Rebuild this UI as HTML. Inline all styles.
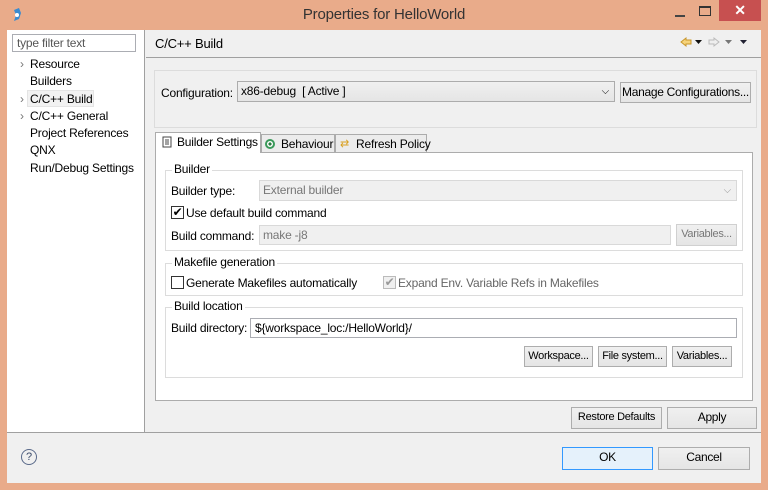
<!DOCTYPE html><html><head><style>
*{box-sizing:border-box;margin:0;padding:0}
body{width:768px;height:490px;background:#e9ab8a;font:12px "Liberation Sans",sans-serif;letter-spacing:-0.2px;color:#000;position:relative;overflow:hidden}
.a{position:absolute;white-space:nowrap}
.btn{position:absolute;white-space:nowrap;overflow:hidden;border:1px solid #adadad;background:linear-gradient(#f0f0f0,#e5e5e5);text-align:center;line-height:19px;font-size:11px;letter-spacing:-0.3px}
.grp{position:absolute;border:1px solid #dcdcdc}
.gl{position:absolute;top:-9px;left:6px;padding:0 2px;background:#fff;white-space:nowrap}
.cb{position:absolute;width:13px;height:13px;border:1px solid #333;background:#fff}
</style></head><body>
<svg class="a" style="left:10px;top:7px" width="14" height="16"><path d="M4 3 L9 1 L11 6 L9 12 L4 14 L6 8Z" fill="#3a8bd0"/><circle cx="7" cy="8" r="2" fill="#fff"/></svg>
<div class="a" style="left:0;width:768px;top:6px;text-align:center;font-size:15px;color:#333">Properties for HelloWorld</div>
<div class="a" style="left:675px;top:15px;width:10px;height:2px;background:#444"></div>
<div class="a" style="left:699px;top:6px;width:12px;height:10px;border:1px solid #333;border-top-width:2px"></div>
<div class="a" style="left:719px;top:0;width:42px;height:21px;background:#c75050;color:#fff;text-align:center;font-size:14px;line-height:20px;font-weight:bold">✕</div>
<div class="a" style="left:7px;top:30px;width:754px;height:453px;background:#f0f0f0"></div>
<div class="a" style="left:7px;top:30px;width:138px;height:402px;background:#fff;border-right:1px solid #a0a0a0"></div>
<div class="a" style="left:12px;top:34px;width:124px;height:18px;border:1px solid #abadb3;background:#fff;color:#555;padding-left:4px;line-height:16px">type filter text</div>
<div class="a" style="left:20px;top:57px;color:#777">›</div>
<div class="a" style="left:30px;top:57px">Resource</div>
<div class="a" style="left:30px;top:74px">Builders</div>
<div class="a" style="left:20px;top:92px;color:#777">›</div>
<div class="a" style="left:27px;top:90px;width:67px;height:17px;background:#f2f2f2;border:1px solid #e4e4e4"></div>
<div class="a" style="left:30px;top:92px">C/C++ Build</div>
<div class="a" style="left:20px;top:109px;color:#777">›</div>
<div class="a" style="left:30px;top:109px">C/C++ General</div>
<div class="a" style="left:30px;top:126px">Project References</div>
<div class="a" style="left:30px;top:143px">QNX</div>
<div class="a" style="left:30px;top:161px">Run/Debug Settings</div>
<div class="a" style="left:146px;top:57px;width:615px;height:1px;background:#a0a0a0"></div>
<div class="a" style="left:155px;top:36px;font-size:13px">C/C++ Build</div>
<svg class="a" style="left:680px;top:36px" width="80" height="12"><path d="M1 6 L6 2 V4 H11 V8 H6 V10Z" fill="#f6d37a" stroke="#c8962a"/><path d="M15 4 H22 L18.5 8Z" fill="#111"/><path d="M39 6 L34 2 V4 H29 V8 H34 V10Z" fill="#eee" stroke="#bbb"/><path d="M45 4 H52 L48.5 8Z" fill="#777"/><path d="M60 4 H67 L63.5 8Z" fill="#223"/></svg>
<div class="a" style="left:154px;top:70px;width:603px;height:58px;border:1px solid #dcdcdc"></div>
<div class="a" style="left:161px;top:86px">Configuration:</div>
<div class="a" style="left:237px;top:81px;width:378px;height:21px;border:1px solid #acacac;background:linear-gradient(#f0f0f0,#e5e5e5);padding-left:3px;line-height:19px">x86-debug&nbsp; [ Active ]<span style="position:absolute;right:5px;font-size:10px">⌵</span></div>
<div class="btn" style="left:620px;top:82px;width:131px;height:21px;font-size:12px">Manage Configurations...</div>
<div class="a" style="left:155px;top:152px;width:598px;height:249px;background:#fff;border:1px solid #acacac"></div>
<div class="a" style="left:155px;top:132px;width:106px;height:21px;background:#fff;border:1px solid #acacac;border-bottom:none;padding-left:21px;line-height:19px">Builder Settings</div>
<svg class="a" style="left:162px;top:136px" width="10" height="12"><rect x="1" y="1" width="8" height="10" fill="#fff" stroke="#444"/><path d="M3 4H7M3 6H7M3 8H7" stroke="#444"/></svg>
<div class="a" style="left:261px;top:134px;width:74px;height:19px;background:#ececec;border:1px solid #acacac;padding-left:19px;line-height:18px">Behaviour</div>
<div class="a" style="left:265px;top:139px;width:10px;height:10px;border-radius:50%;border:2px solid #3a9a5a;background:radial-gradient(#2a7a40 35%,#fff 40%)"></div>
<div class="a" style="left:335px;top:134px;width:92px;height:19px;background:#ececec;border:1px solid #acacac;padding-left:20px;line-height:18px">Refresh Policy</div>
<div class="a" style="left:340px;top:137px;color:#d9a020;font-size:11px">⇄</div>
<div class="grp" style="left:165px;top:170px;width:578px;height:81px"><span class="gl">Builder</span></div>
<div class="a" style="left:171px;top:184px">Builder type:</div>
<div class="a" style="left:259px;top:180px;width:478px;height:21px;background:#f0f0f0;border:1px solid #d9d9d9;color:#777;padding-left:3px;line-height:19px">External builder<span style="position:absolute;right:5px;font-size:10px;color:#999">⌵</span></div>
<div class="cb" style="left:171px;top:206px;font-size:12px;line-height:11px;text-align:center">✔</div>
<div class="a" style="left:186px;top:206px">Use default build command</div>
<div class="a" style="left:171px;top:229px">Build command:</div>
<div class="a" style="left:259px;top:225px;width:412px;height:20px;background:#f0f0f0;border:1px solid #d9d9d9;color:#777;padding-left:3px;line-height:18px">make -j8</div>
<div class="btn" style="left:676px;top:224px;width:61px;height:22px;color:#777;border-color:#d0d0d0">Variables...</div>
<div class="grp" style="left:165px;top:263px;width:578px;height:33px"><span class="gl">Makefile generation</span></div>
<div class="cb" style="left:171px;top:276px"></div>
<div class="a" style="left:186px;top:276px">Generate Makefiles automatically</div>
<div class="cb" style="left:383px;top:276px;border-color:#bbb;color:#999;font-size:12px;line-height:11px;text-align:center;background:#f0f0f0">✔</div>
<div class="a" style="left:398px;top:276px;color:#666">Expand Env. Variable Refs in Makefiles</div>
<div class="grp" style="left:165px;top:307px;width:578px;height:71px"><span class="gl">Build location</span></div>
<div class="a" style="left:171px;top:321px">Build directory:</div>
<div class="a" style="left:250px;top:318px;width:487px;height:20px;border:1px solid #abadb3;background:#fff;padding-left:4px;line-height:18px">${workspace_loc:/HelloWorld}/</div>
<div class="btn" style="left:524px;top:346px;width:69px;height:21px">Workspace...</div>
<div class="btn" style="left:598px;top:346px;width:69px;height:21px">File system...</div>
<div class="btn" style="left:672px;top:346px;width:60px;height:21px">Variables...</div>
<div class="btn" style="left:571px;top:407px;width:91px;height:22px">Restore Defaults</div>
<div class="btn" style="left:667px;top:407px;width:90px;height:22px;font-size:12px">Apply</div>
<div class="a" style="left:7px;top:432px;width:754px;height:1px;background:#a0a0a0"></div>
<div class="a" style="left:21px;top:449px;width:16px;height:16px;border-radius:50%;border:1px solid #5a6a8a;text-align:center;line-height:14px;font-size:11px;color:#3a4a6a">?</div>
<div class="btn" style="left:562px;top:447px;width:91px;height:23px;border-color:#3399ff;background:#e5f1fb;font-size:12px">OK</div>
<div class="btn" style="left:658px;top:447px;width:92px;height:23px;font-size:12px">Cancel</div>
</body></html>
